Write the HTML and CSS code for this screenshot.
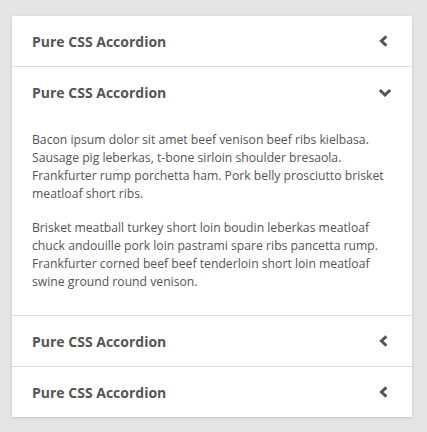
FILE: index.html
```html
<!DOCTYPE html>
<html>
<head>
<meta charset="utf-8">
<link rel="stylesheet" href="styles.css">
</head>
<body>
<div class="accordion">
  <div class="item">
    <div class="head"><span class="title">Pure CSS Accordion</span>
      <span class="icon"><svg width="9" height="12" viewBox="0 0 9 12"><path d="M7.4 1.3 L2.4 6 L7.4 10.7" fill="none" stroke="#555" stroke-width="3"/></svg></span>
    </div>
  </div>
  <div class="item open">
    <div class="head"><span class="title">Pure CSS Accordion</span>
      <span class="icon down"><svg width="13" height="8" viewBox="0 0 13 8"><path d="M1.3 1 L6.5 6 L11.7 1" fill="none" stroke="#555" stroke-width="3"/></svg></span>
    </div>
    <div class="body">
      <p>Bacon ipsum dolor sit amet beef venison beef ribs kielbasa. Sausage pig leberkas, t-bone sirloin shoulder bresaola. Frankfurter rump porchetta ham. Pork belly prosciutto brisket meatloaf short ribs.</p>
      <p>Brisket meatball turkey short loin boudin leberkas meatloaf chuck andouille pork loin pastrami spare ribs pancetta rump. Frankfurter corned beef beef tenderloin short loin meatloaf swine ground round venison.</p>
    </div>
  </div>
  <div class="item">
    <div class="head"><span class="title">Pure CSS Accordion</span>
      <span class="icon"><svg width="9" height="12" viewBox="0 0 9 12"><path d="M7.4 1.3 L2.4 6 L7.4 10.7" fill="none" stroke="#555" stroke-width="3"/></svg></span>
    </div>
  </div>
  <div class="item">
    <div class="head"><span class="title">Pure CSS Accordion</span>
      <span class="icon"><svg width="9" height="12" viewBox="0 0 9 12"><path d="M7.4 1.3 L2.4 6 L7.4 10.7" fill="none" stroke="#555" stroke-width="3"/></svg></span>
    </div>
  </div>
</div>
</body>
</html>
```
FILE: styles.css
```css
html, body { margin: 0; padding: 0; }
body {
  background: #e5e5e5;
  font-family: "Open Sans", "Noto Sans", sans-serif;
  color: #555;
  padding: 16px 12px;
}
.accordion {
  width: 400px;
  background: #fff;
  box-shadow: 0 1px 3px rgba(0,0,0,0.15);
}
.item + .item { border-top: 1px solid #ddd; }
.head {
  height: 50px;
  display: flex;
  align-items: center;
  justify-content: space-between;
  padding: 0 21px 0 20px;
}
.title {
  font-weight: 700;
  font-size: 14px;
  color: #555;
}
.icon {
  width: 16px;
  height: 12px;
  display: flex;
  align-items: center;
  justify-content: center;
}
.icon svg { display: block; }
.icon.down { transform: translate(1.5px, 1px); }
.body {
  padding: 14px 20px 24px 20px;
  font-size: 12.2px;
  line-height: 18px;
}
.body p { margin: 0 0 16px 0; }
.body p:last-child { margin-bottom: 0; }
```
